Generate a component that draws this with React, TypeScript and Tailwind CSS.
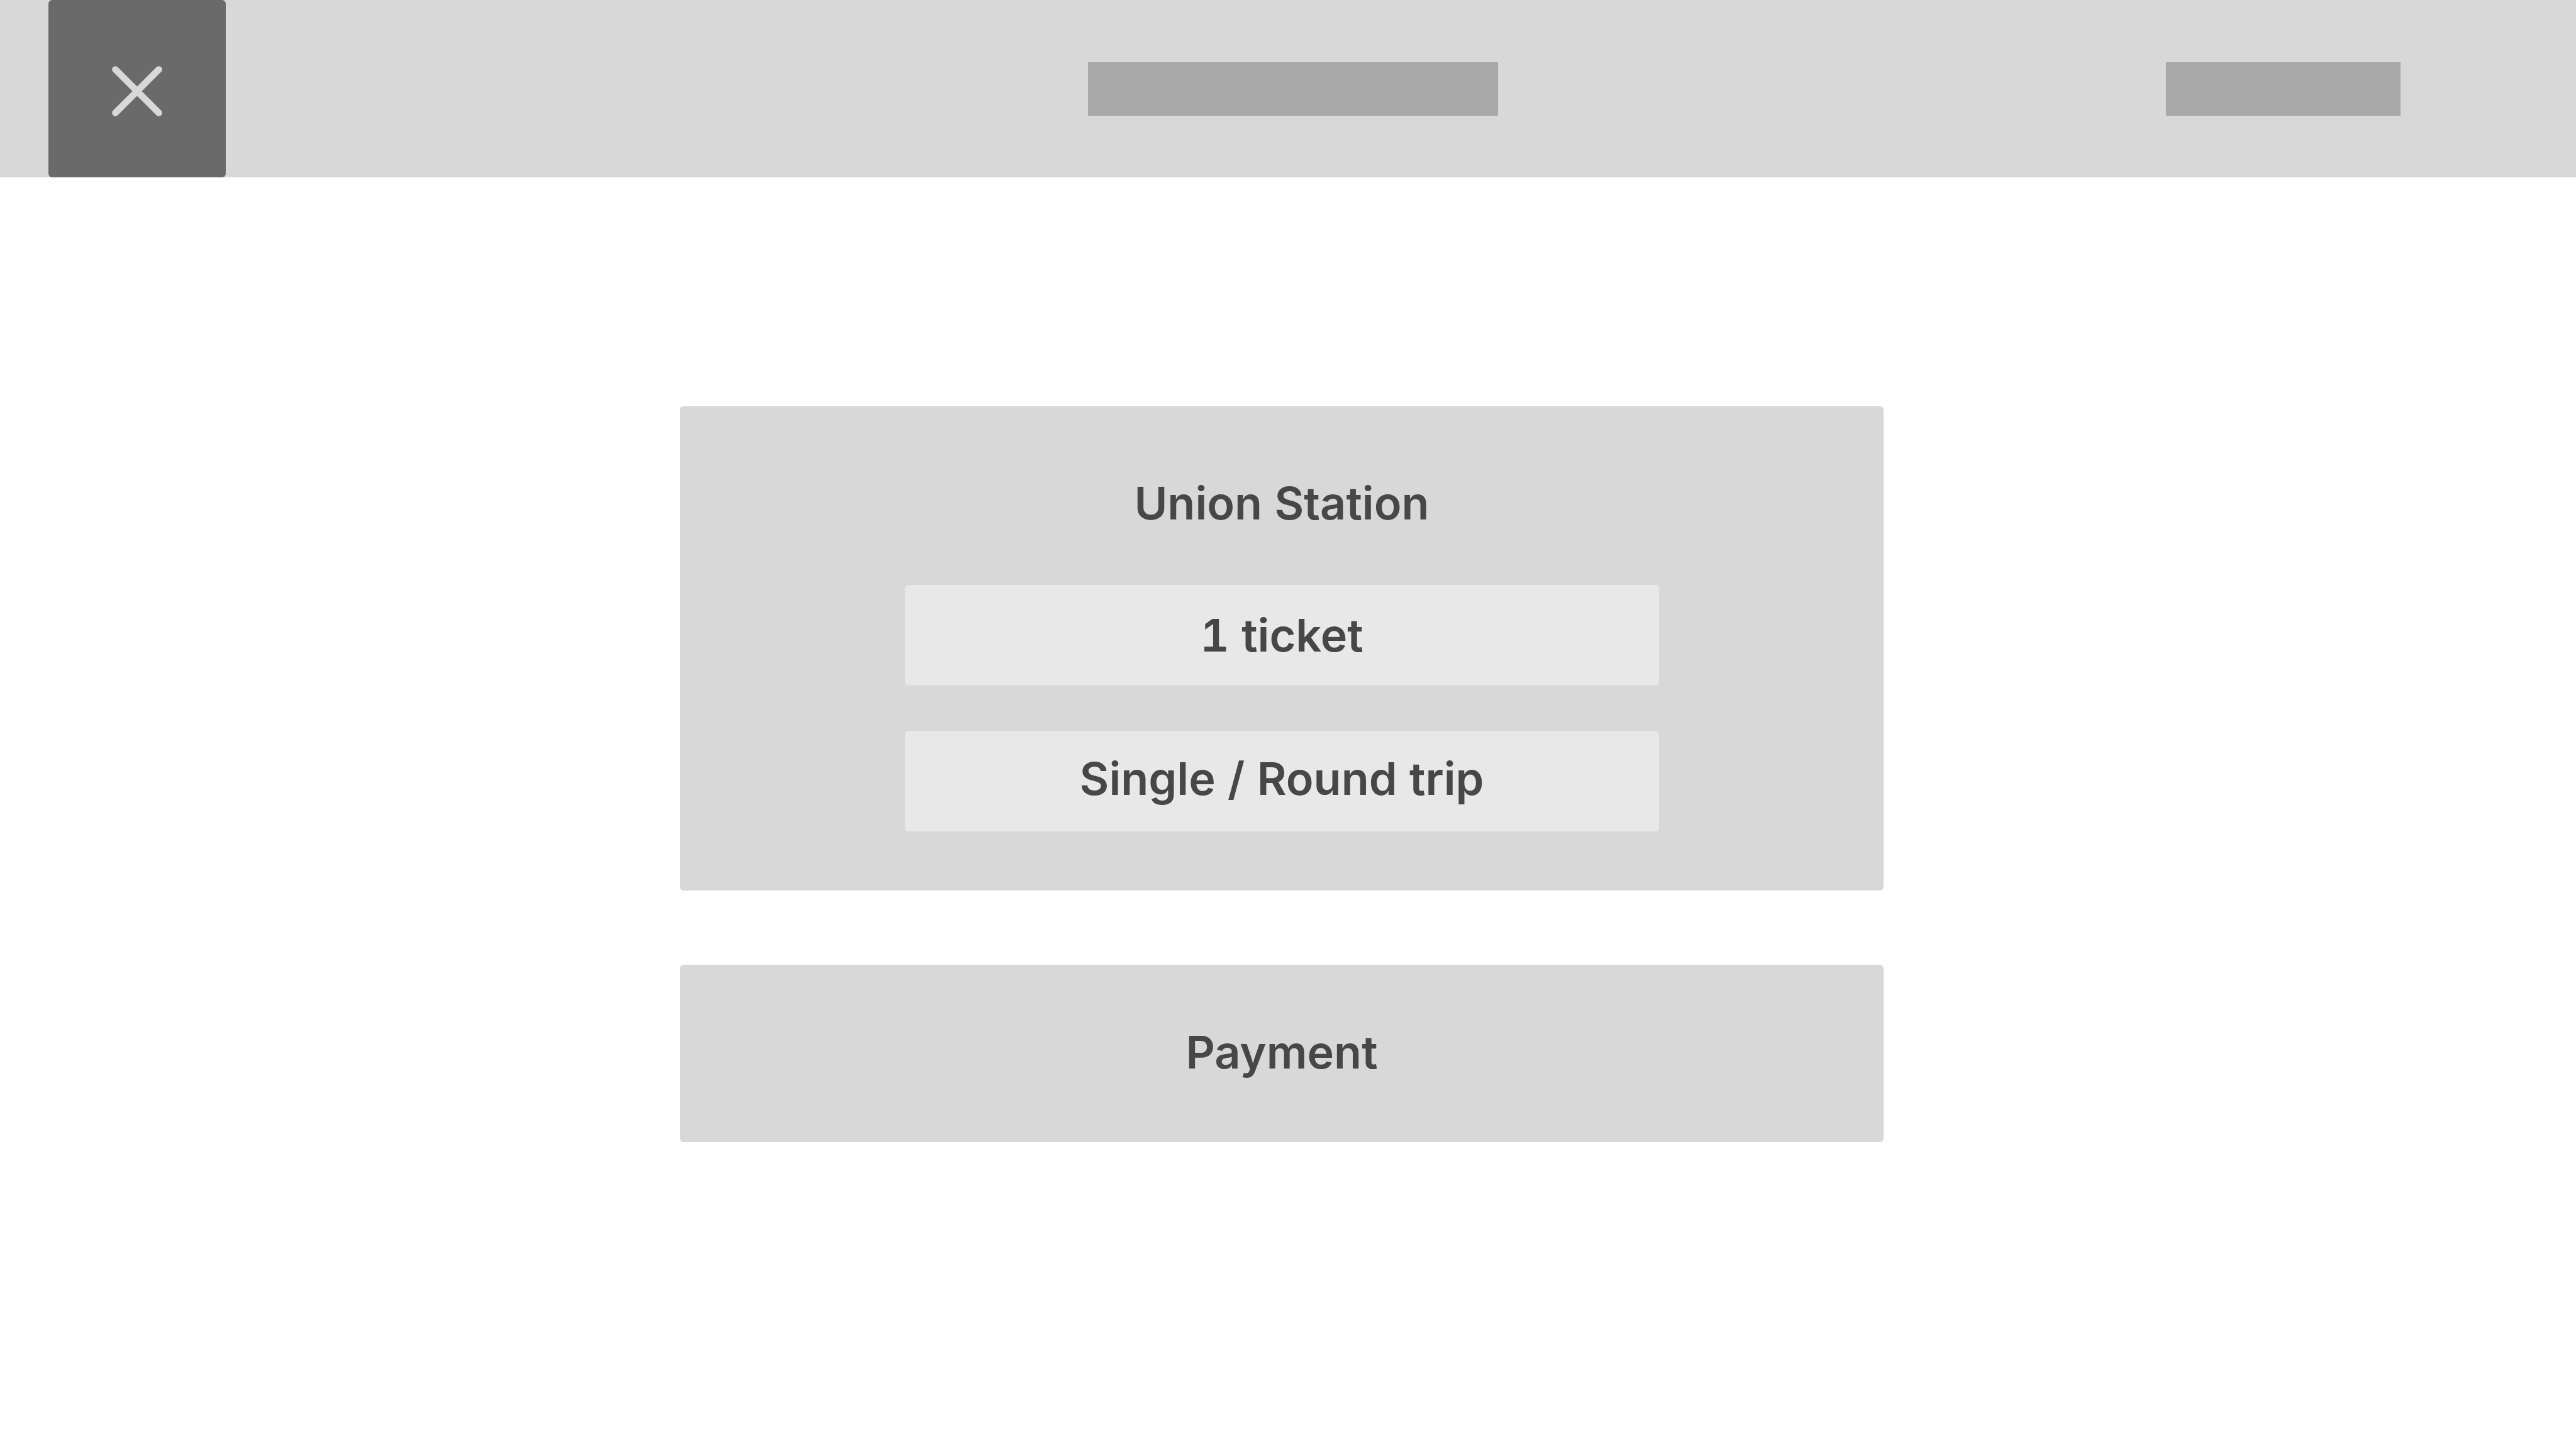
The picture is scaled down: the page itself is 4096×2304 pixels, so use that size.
import React from "react";

function CloseIcon() {
  return (
    <svg
      viewBox="0 0 80 80"
      className="h-20 w-20"
      fill="none"
      stroke="currentColor"
      strokeWidth="10.6"
      strokeLinecap="round"
      aria-hidden="true"
    >
      <path d="M5.5 5.5 74.5 74.5M74.5 5.5 5.5 74.5" />
    </svg>
  );
}

function Option({ label, className = "" }: { label: string; className?: string }) {
  return (
    <button
      type="button"
      className={`flex h-[160px] w-full items-center justify-center rounded-md bg-[#e8e8e8] ${className}`}
    >
      {label}
    </button>
  );
}

export default function App() {
  return (
    <div className="min-h-screen bg-white font-['Inter','Liberation_Sans',sans-serif] text-[72px] leading-[96px] font-semibold text-[#474747] tabular-nums">
      <header className="grid grid-cols-[1fr_auto_1fr] items-center bg-[#d8d8d8] pl-4">
        <div className="pl-[61px]">
          <button
            type="button"
            aria-label="Close"
            className="flex h-[282px] w-[282px] items-center justify-center rounded-md bg-[#6a6a6a] pt-2 text-[#d8d8d8]"
          >
            <CloseIcon />
          </button>
        </div>
        <div className="h-[85px] w-[652px] bg-[#a8a8a8]" />
        <div className="mr-[279px] h-[85px] w-[373px] justify-self-end bg-[#a8a8a8]" />
      </header>

      <main className="flex flex-col items-center gap-[118px] pt-[364px] pr-5">
        <section className="flex w-[1914px] max-w-full flex-col items-center rounded-md bg-[#d8d8d8] pt-[106px] pb-[94px]">
          <h1>Union Station</h1>
          <div className="mt-[82px] flex w-[1199px] max-w-full flex-col gap-[72px]">
            <Option label="1 ticket" />
            <Option label="Single / Round trip" className="pb-2" />
          </div>
        </section>
        <button
          type="button"
          className="flex h-[282px] w-[1914px] max-w-full items-center justify-center rounded-md bg-[#d8d8d8] pb-1"
        >
          Payment
        </button>
      </main>
    </div>
  );
}
